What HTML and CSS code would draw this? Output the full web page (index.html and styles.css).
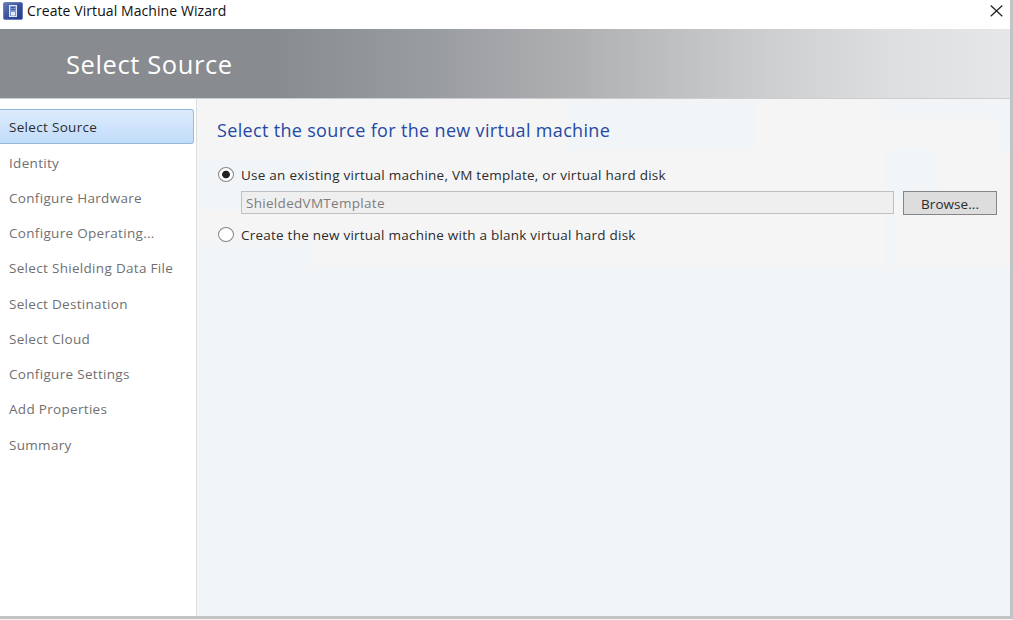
FILE: index.html
```html
<!DOCTYPE html>
<html lang="en">
<head>
<meta charset="utf-8">
<title>Create Virtual Machine Wizard</title>
<link rel="stylesheet" href="styles.css">
</head>
<body>
<div class="window">
  <header class="titlebar">
    <svg class="app-icon" width="20" height="18" viewBox="0 0 20 18">
      <defs><linearGradient id="g" x1="0" y1="0" x2="1" y2="1"><stop offset="0" stop-color="#627bb5"/><stop offset=".5" stop-color="#3b51a0"/><stop offset="1" stop-color="#20398a"/></linearGradient></defs>
      <rect x=".5" y=".5" width="19" height="17" rx="1.5" fill="url(#g)" stroke="#6b7fb5"/>
      <rect x="6.5" y="3.5" width="7" height="11" fill="#7f94c8" stroke="#dce4f5"/>
      <path d="M8 5.5h4M8 7.5h4" stroke="#4056a0"/>
      <path d="M8 10h4v3.5H8z" fill="#e4eaf7"/>
    </svg>
    <span class="title">Create Virtual Machine Wizard</span>
    <svg class="close" width="13" height="12" viewBox="0 0 13 12"><path d="M.7.5l11.6 10.8M12.3.5L.7 11.3" stroke="#222" stroke-width="1.25" fill="none"/></svg>
  </header>
  <div class="banner"><h1>Select Source</h1></div>
  <div class="body">
    <nav class="steps">
      <a class="step active">Select Source</a>
      <a class="step">Identity</a>
      <a class="step">Configure Hardware</a>
      <a class="step">Configure Operating...</a>
      <a class="step">Select Shielding Data File</a>
      <a class="step">Select Destination</a>
      <a class="step">Select Cloud</a>
      <a class="step">Configure Settings</a>
      <a class="step">Add Properties</a>
      <a class="step">Summary</a>
    </nav>
    <main class="content">
      <h2>Select the source for the new virtual machine</h2>
      <label class="option first"><span class="radio on"></span><span class="opt-text">Use an existing virtual machine, VM template, or virtual hard disk</span></label>
      <div class="source"><div class="field">ShieldedVMTemplate</div><button class="browse">Browse...</button></div>
      <label class="option last"><span class="radio"></span><span class="opt-text">Create the new virtual machine with a blank virtual hard disk</span></label>
    </main>
  </div>
</div>
</body>
</html>
```
FILE: styles.css
```css
* { box-sizing: border-box; }
body { margin: 0; background: #f4f4f4; font-family: "Open Sans", "Noto Sans", sans-serif; }
.window { width: 1013px; height: 619px; display: flex; flex-direction: column; background: #fff; border-right: 3px solid #c3c3c3; border-bottom: 3px solid #c3c3c3; }
.titlebar { height: 29px; flex: none; display: flex; align-items: flex-start; padding: 2px 7px 0 3px; }
.title { margin: -1px 0 0 4px; font-size: 14px; line-height: 20px; letter-spacing: .08px; color: #111; white-space: nowrap; }
.close { margin: 3px 0 0 auto; }
.banner { height: 70px; flex: none; padding: 17px 0 0 66px; border-bottom: 1px solid #cbcdcf; background: linear-gradient(90deg, #888b8f 0, #888b8f 27%, #999c9f 42%, #aeb0b2 57%, #c9cbcd 74%, #dcddde 87%, #e6e7e8 100%); }
h1 { margin: 0; font-size: 25.5px; line-height: 36px; font-weight: 400; letter-spacing: .6px; color: #fff; white-space: nowrap; }
.body { flex: 1; display: flex; min-height: 0; }
.steps { width: 197px; flex: none; padding-top: 10px; border-right: 1px solid #dcdfe1; display: flex; flex-direction: column; }
.step { height: 35.25px; padding-left: 9px; font-size: 13.5px; line-height: 36px; letter-spacing: .31px; color: #707070; white-space: nowrap; }
.step.active { width: 194px; height: 35px; margin-bottom: .6px; border: 1px solid #98b8dc; border-left: 0; border-radius: 0 3px 3px 0; background: linear-gradient(#dcebfc, #c1dcfa); color: #2c2c2c; line-height: 34px; }
.content {
  flex: 1; min-width: 0; padding: 19px 14px 0 20px;
  background:
    linear-gradient(#f1f5f8, #f1f5f8) 371px 0 / 187px 51px no-repeat,
    linear-gradient(#f1f5f8, #f1f5f8) 684px 0 / 129px 20px no-repeat,
    linear-gradient(#f1f5f8, #f1f5f8) 801px 20px / 12px 32px no-repeat,
    linear-gradient(#f1f5f8, #f1f5f8) 0 61px / 114px 50px no-repeat,
    linear-gradient(#f1f5f8, #f1f5f8) 0 142px / 114px 27px no-repeat,
    linear-gradient(#f1f5f8, #f1f5f8) 688px 50px / 53px 50px no-repeat,
    linear-gradient(#f1f5f8, #f1f5f8) 688px 100px / 10px 69px no-repeat,
    linear-gradient(#f5f5f6, #f5f5f6) 0 0 / 100% 168px no-repeat,
    #f1f5f8;
}
h2 { margin: 0; font-size: 18px; line-height: 24px; font-weight: 400; letter-spacing: .33px; color: #2449a5; white-space: nowrap; }
.option { display: flex; align-items: center; height: 20px; font-size: 13.5px; letter-spacing: .25px; color: #2c2c2c; white-space: nowrap; }
.option.first { margin-top: 23px; }
.option.last { letter-spacing: .23px; }
.radio { width: 16px; height: 15px; margin: 0 7px 0 1px; border: 1px solid #858585; border-radius: 50%; background: #fff; flex: none; position: relative; top: -1px; }
.radio.on { background: radial-gradient(circle, #222 0 3.5px, #fff 4.2px); }
.source { display: flex; margin: 6px -1px 11px 24px; gap: 8px; }
.field { width: 654px; height: 23px; border: 1px solid #bfc0c2; background: #efefef; padding-left: 4px; font-size: 13.5px; line-height: 22px; letter-spacing: .3px; color: #7d7d7d; }
.browse { width: 94px; height: 24px; margin-bottom: -1px; margin-left: 1px; padding: 1px 0 0; border: 1px solid #858585; background: #ddd; font: 13.5px/20px "Open Sans", sans-serif; letter-spacing: .05px; color: #2c2c2c; }
```
